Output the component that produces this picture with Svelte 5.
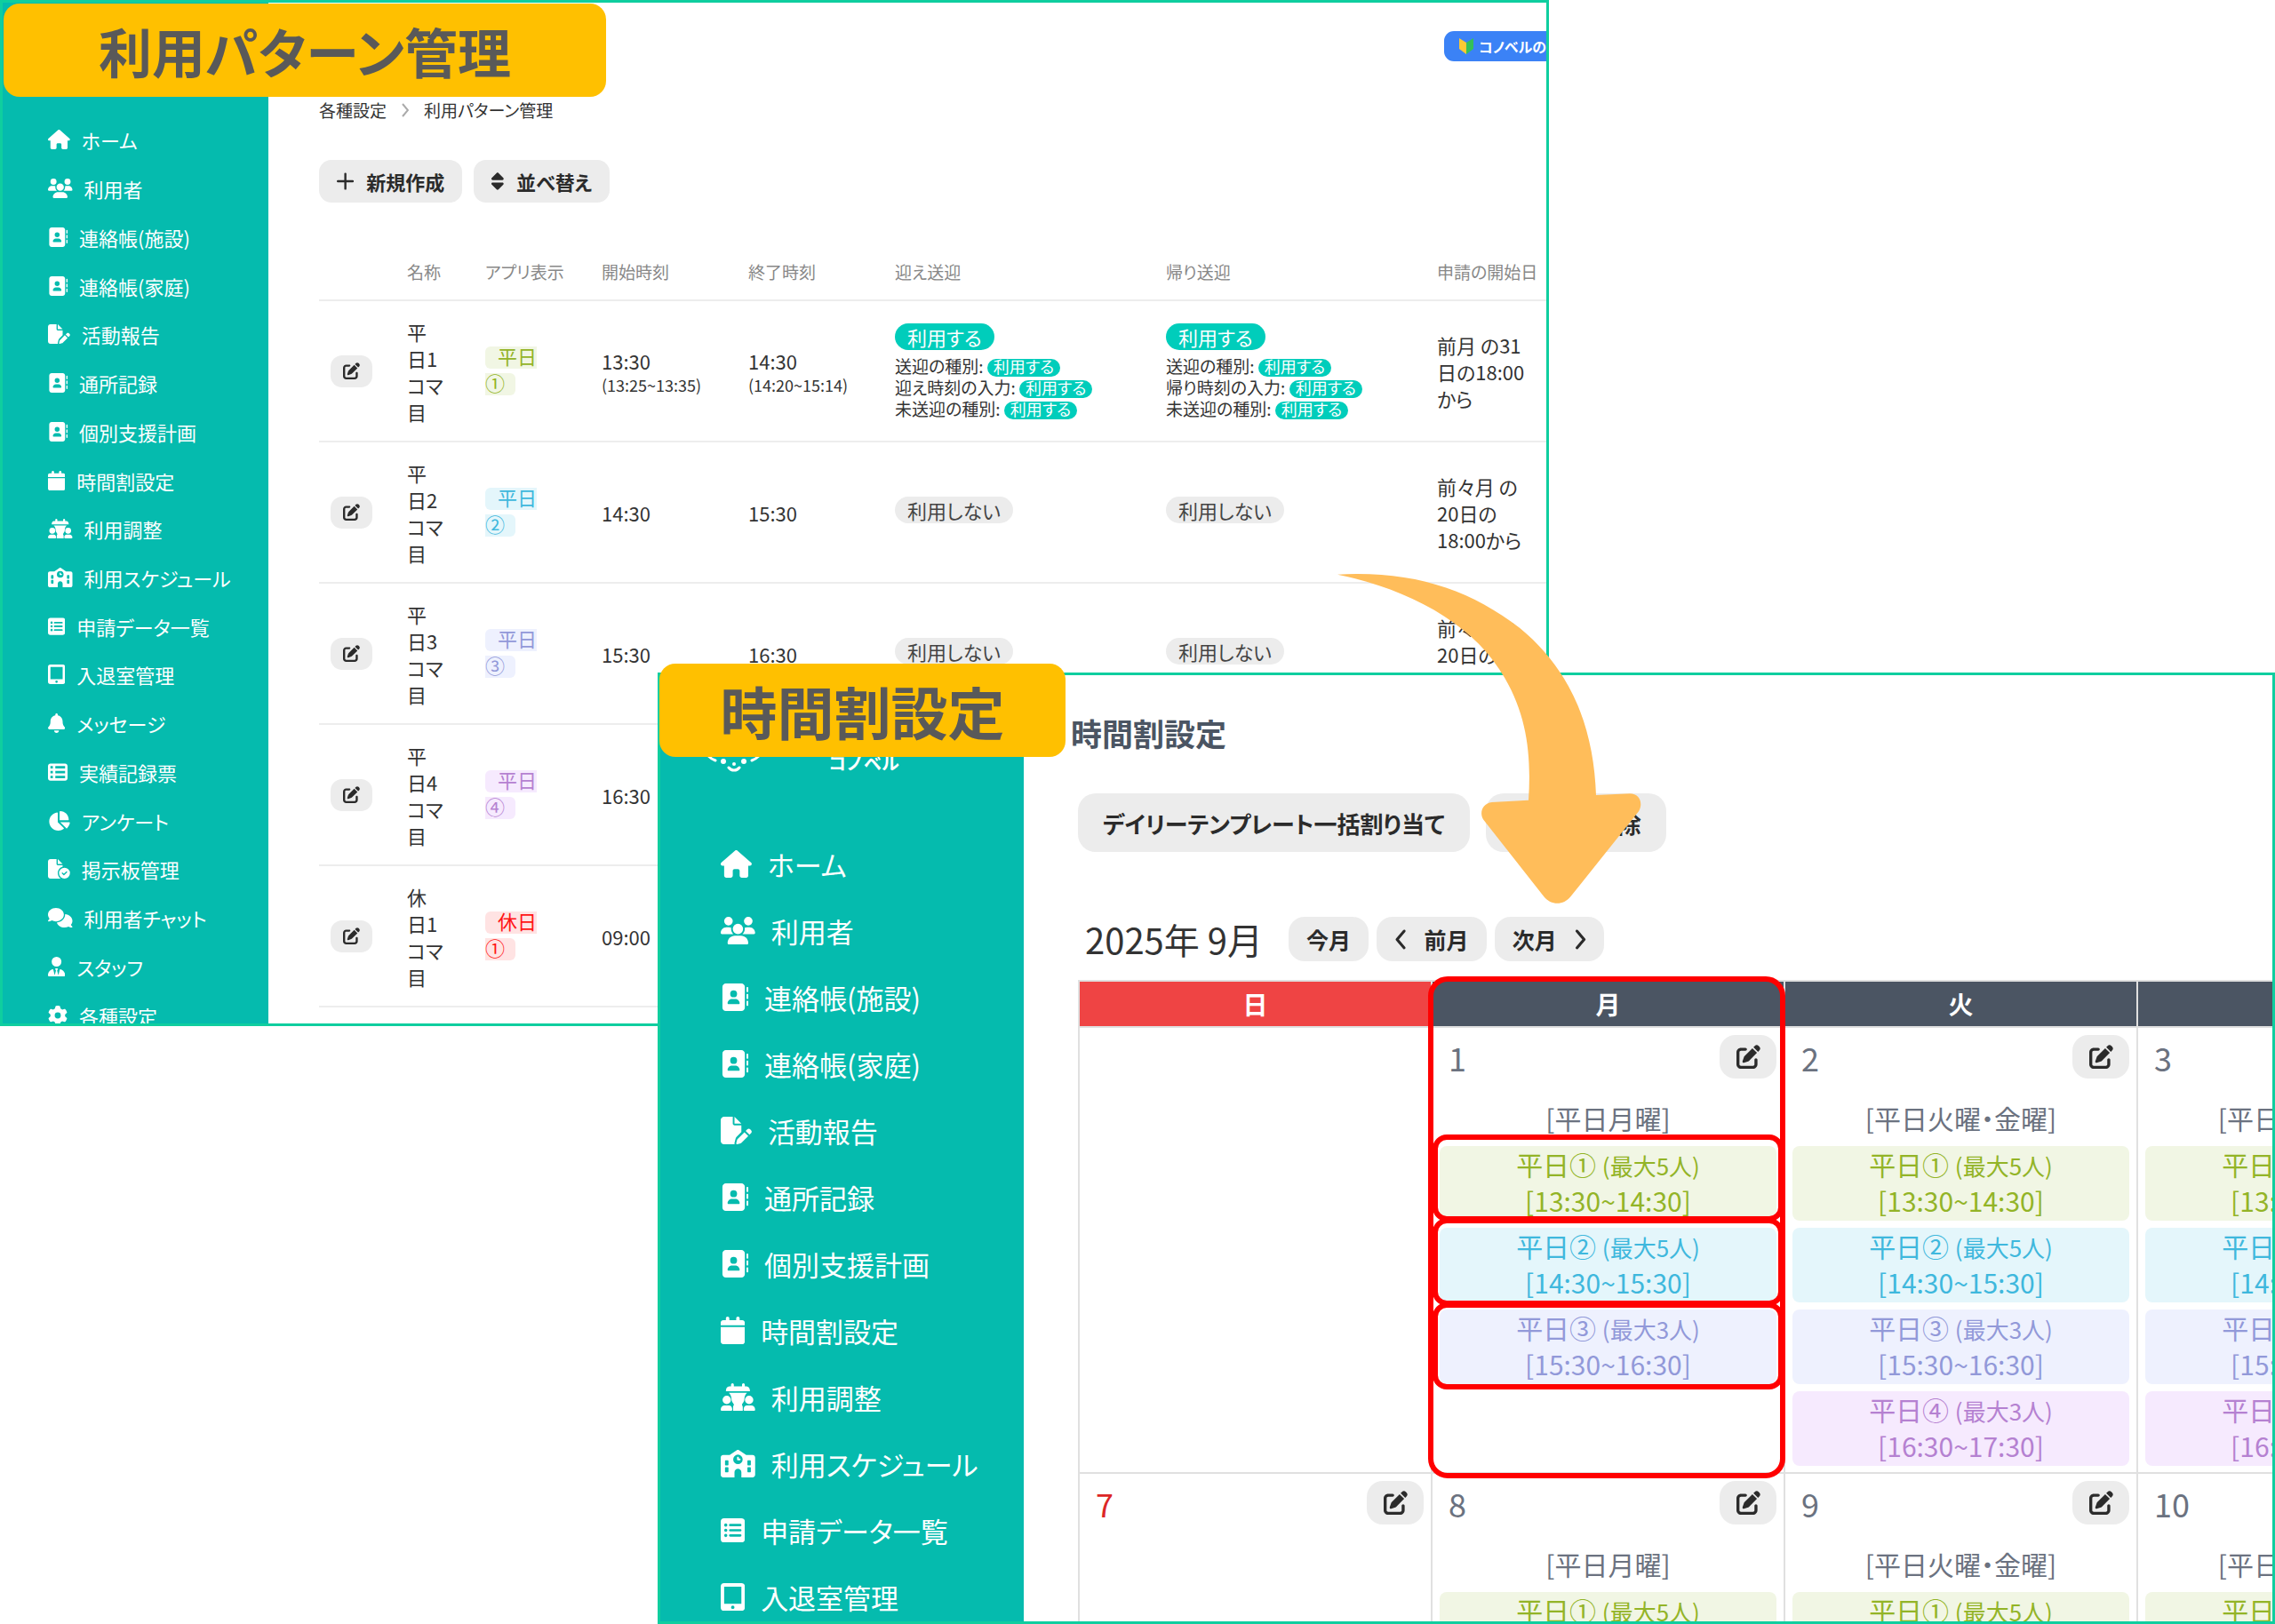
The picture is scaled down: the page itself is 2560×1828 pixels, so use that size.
<script>
  const icons = {
    house: {
      w: 576,
      d: "M575.8 255.5c0 18-15 32.1-32 32.1l-32 0 .7 160.2c0 2.7-.2 5.4-.5 8.1l0 16.2c0 22.1-17.9 40-40 40l-16 0c-1.1 0-2.2 0-3.3-.1c-1.4 .1-2.8 .1-4.2 .1L416 512l-24 0c-22.1 0-40-17.9-40-40l0-24 0-64c0-17.7-14.3-32-32-32l-64 0c-17.7 0-32 14.3-32 32l0 64 0 24c0 22.1-17.9 40-40 40l-24 0-31.9 0c-1.5 0-3-.1-4.5-.2c-1.2 .1-2.4 .2-3.6 .2l-16 0c-22.1 0-40-17.9-40-40l0-112c0-.9 0-1.9 .1-2.8l0-69.7-32 0c-18 0-32-14-32-32.1c0-9 3-17 10-24L266.4 8c7-7 15-8 22-8s15 2 21 7L564.8 231.5c8 7 12 15 11 24z"
    },
    users: {
      w: 640,
      d: "M144 0a80 80 0 1 1 0 160A80 80 0 1 1 144 0zM512 0a80 80 0 1 1 0 160A80 80 0 1 1 512 0zM0 298.7C0 239.8 47.8 192 106.7 192l42.7 0c15.9 0 31 3.5 44.6 9.7c-1.3 7.2-1.9 14.7-1.9 22.3c0 38.2 16.8 72.5 43.3 96c-.2 0-.4 0-.7 0L21.3 320C9.6 320 0 310.4 0 298.7zM405.3 320c-.2 0-.4 0-.7 0c26.6-23.5 43.3-57.8 43.3-96c0-7.6-.7-15-1.9-22.3c13.6-6.3 28.7-9.7 44.6-9.7l42.7 0C592.2 192 640 239.8 640 298.7c0 11.8-9.6 21.3-21.3 21.3l-213.3 0zM224 224a96 96 0 1 1 192 0 96 96 0 1 1 -192 0zM128 485.3C128 411.7 187.7 352 261.3 352l117.3 0C452.3 352 512 411.7 512 485.3c0 14.7-11.9 26.7-26.7 26.7l-330.7 0c-14.7 0-26.7-11.9-26.7-26.7z"
    },
    book: {
      w: 512,
      d: "M96 0C60.7 0 32 28.7 32 64l0 384c0 35.3 28.7 64 64 64l288 0c35.3 0 64-28.7 64-64l0-384c0-35.3-28.7-64-64-64L96 0zM208 288l64 0c44.2 0 80 35.8 80 80c0 8.8-7.2 16-16 16l-192 0c-8.8 0-16-7.2-16-16c0-44.2 35.8-80 80-80zm-32-96a64 64 0 1 1 128 0 64 64 0 1 1 -128 0zM512 80c0-8.8-7.2-16-16-16s-16 7.2-16 16l0 64c0 8.8 7.2 16 16 16s16-7.2 16-16l0-64zM496 192c-8.8 0-16 7.2-16 16l0 64c0 8.8 7.2 16 16 16s16-7.2 16-16l0-64c0-8.8-7.2-16-16-16zm16 144c0-8.8-7.2-16-16-16s-16 7.2-16 16l0 64c0 8.8 7.2 16 16 16s16-7.2 16-16l0-64z"
    },
    filePen: {
      w: 576,
      d: "M0 64C0 28.7 28.7 0 64 0L224 0l0 128c0 17.7 14.3 32 32 32l128 0 0 125.7-86.8 86.8c-10.3 10.3-17.5 23.1-21 37.2l-18.7 74.9c-2.3 9.2-1.8 18.8 1.3 27.5L64 512c-35.3 0-64-28.7-64-64L0 64zm384 64l-128 0L256 0 384 128zM549.8 235.7l14.4 14.4c15.6 15.6 15.6 40.9 0 56.6l-29.4 29.4-71-71 29.4-29.4c15.6-15.6 40.9-15.6 56.6 0zM311.9 417L441.1 287.8l71 71L382.9 487.9c-4.1 4.1-9.2 7-14.9 8.4l-60.1 15c-5.5 1.4-11.2-.2-15.2-4.2s-5.6-9.7-4.2-15.2l15-60.1c1.4-5.6 4.3-10.8 8.4-14.9z"
    },
    calendar: {
      w: 448,
      d: "M96 32l0 32L48 64C21.5 64 0 85.5 0 112l0 48 448 0 0-48c0-26.5-21.5-48-48-48l-48 0 0-32c0-17.7-14.3-32-32-32s-32 14.3-32 32l0 32L160 64l0-32c0-17.7-14.3-32-32-32S96 14.3 96 32zM448 192L0 192 0 464c0 26.5 21.5 48 48 48l352 0c26.5 0 48-21.5 48-48l0-272z"
    },
    adjust: {
      w: 640,
      d: "M192 26a26 26 0 0 1 52 0V56H396V26a26 26 0 0 1 52 0V56H480c40 0 64 36 64 92H96c0-56 24-92 64-92h32zM150 176h340c-20 14-50 54-50 114c0 56-30 72-44 104c-6 14 14 26 14 50v68H230v-68c0-24 20-36 14-50c-14-32-44-48-44-104c0-60-30-100-50-114zM112 232a78 78 0 1 1 0 156a78 78 0 1 1 0-156zM528 232a78 78 0 1 1 0 156a78 78 0 1 1 0-156zM0 490c0-44 32-76 74-76h78c40 0 62 34 62 76c0 12-10 22-22 22H22c-12 0-22-10-22-22zM426 490c0-42 22-76 62-76h78c42 0 74 32 74 76c0 12-10 22-22 22H448c-12 0-22-10-22-22z"
    },
    school: {
      w: 640,
      d: "M337.8 5.4C327-1.8 313-1.8 302.2 5.4L166.3 96 48 96C21.5 96 0 117.5 0 144L0 464c0 26.5 21.5 48 48 48l208 0 0-96c0-35.3 28.7-64 64-64s64 28.7 64 64l0 96 208 0c26.5 0 48-21.5 48-48l0-320c0-26.5-21.5-48-48-48L473.7 96 337.8 5.4zM96 192l32 0c8.8 0 16 7.2 16 16l0 64c0 8.8-7.2 16-16 16l-32 0c-8.8 0-16-7.2-16-16l0-64c0-8.8 7.2-16 16-16zm400 16c0-8.8 7.2-16 16-16l32 0c8.8 0 16 7.2 16 16l0 64c0 8.8-7.2 16-16 16l-32 0c-8.8 0-16-7.2-16-16l0-64zM96 320l32 0c8.8 0 16 7.2 16 16l0 64c0 8.8-7.2 16-16 16l-32 0c-8.8 0-16-7.2-16-16l0-64c0-8.8 7.2-16 16-16zm400 16c0-8.8 7.2-16 16-16l32 0c8.8 0 16 7.2 16 16l0 64c0 8.8-7.2 16-16 16l-32 0c-8.8 0-16-7.2-16-16l0-64zM232 176a88 88 0 1 1 176 0 88 88 0 1 1 -176 0zm88-48c-8.8 0-16 7.2-16 16l0 32c0 8.8 7.2 16 16 16l32 0c8.8 0 16-7.2 16-16s-7.2-16-16-16l-16 0 0-16c0-8.8-7.2-16-16-16z"
    },
    list: {
      w: 448,
      d: "M64 32h320a64 64 0 0 1 64 64v320a64 64 0 0 1-64 64H64a64 64 0 0 1-64-64V96a64 64 0 0 1 64-64zM64 160a30 30 0 1 0 60 0a30 30 0 1 0-60 0zM64 256a30 30 0 1 0 60 0a30 30 0 1 0-60 0zM64 352a30 30 0 1 0 60 0a30 30 0 1 0-60 0zM176 138h188a22 22 0 0 1 0 44H176a22 22 0 0 1 0-44zM176 234h188a22 22 0 0 1 0 44H176a22 22 0 0 1 0-44zM176 330h188a22 22 0 0 1 0 44H176a22 22 0 0 1 0-44z"
    },
    tablet: {
      w: 448,
      d: "M64 0h320a64 64 0 0 1 64 64v384a64 64 0 0 1-64 64H64a64 64 0 0 1-64-64V64a64 64 0 0 1 64-64zM64 64v320h320V64zM192 448a32 32 0 1 0 64 0a32 32 0 1 0-64 0z"
    },
    bell: {
      w: 448,
      d: "M224 0c-17.7 0-32 14.3-32 32l0 19.2C119 66 64 130.6 64 208l0 18.8c0 47-17.3 92.4-48.5 127.6l-7.4 8.3c-8.4 9.4-10.4 22.9-5.3 34.4S19.4 416 32 416l384 0c12.6 0 24-7.4 29.2-18.9s3.1-25-5.3-34.4l-7.4-8.3C401.3 319.2 384 273.9 384 226.8l0-18.8c0-77.4-55-142-128-156.8L256 32c0-17.7-14.3-32-32-32zm45.3 493.3c12-12 18.7-28.3 18.7-45.3l-64 0-64 0c0 17 6.7 33.3 18.7 45.3s28.3 18.7 45.3 18.7s33.3-6.7 45.3-18.7z"
    },
    tableList: {
      w: 512,
      d: "M0 96C0 60.7 28.7 32 64 32l384 0c35.3 0 64 28.7 64 64l0 320c0 35.3-28.7 64-64 64L64 480c-35.3 0-64-28.7-64-64L0 96zm64 0l0 64 64 0 0-64L64 96zm384 0L192 96l0 64 256 0 0-64zM64 224l0 64 64 0 0-64-64 0zm384 0l-256 0 0 64 256 0 0-64zM64 352l0 64 64 0 0-64-64 0zm384 0l-256 0 0 64 256 0 0-64z"
    },
    pie: {
      w: 576,
      d: "M304 240l0-223.4c0-9 7-16.6 16-16.6C443.7 0 544 100.3 544 224c0 9-7.6 16-16.6 16L304 240zM32 272C32 150.7 122.1 50.3 239 34.3c9.2-1.3 17 6.1 17 15.4L256 288 412.5 444.5c6.7 6.7 6.2 17.7-1.5 23.1C371.8 495.6 323.8 512 272 512C139.5 512 32 404.6 32 272zm526.4 16c9.3 0 16.6 7.8 15.4 17c-7.7 55.9-34.6 105.6-73.9 142.3c-6 5.6-15.4 5.2-21.2-.7L320 288l238.4 0z"
    },
    fileCheck: {
      w: 576,
      d: "M0 64C0 28.7 28.7 0 64 0L224 0l0 128c0 17.7 14.3 32 32 32l128 0 0 38.6C310.1 219.5 256 287.4 256 368c0 59.1 29.1 111.3 73.7 143.3c-3.2 .5-6.4 .7-9.7 .7L64 512c-35.3 0-64-28.7-64-64L0 64zm384 64l-128 0L256 0 384 128zM288 368a144 144 0 1 1 288 0 144 144 0 1 1 -288 0zm211.3-43.3c-6.2-6.2-16.4-6.2-22.6 0L416 385.4l-28.7-28.7c-6.2-6.2-16.4-6.2-22.6 0s-6.2 16.4 0 22.6l40 40c6.2 6.2 16.4 6.2 22.6 0l72-72c6.2-6.2 6.2-16.4 0-22.6z"
    },
    comments: {
      w: 640,
      d: "M208 352c114.9 0 208-78.8 208-176S322.9 0 208 0S0 78.8 0 176c0 38.6 14.7 74.3 39.6 103.4c-3.5 9.4-8.7 17.7-14.2 24.7c-4.8 6.2-9.7 11-13.3 14.3c-1.8 1.6-3.3 2.9-4.3 3.7c-.5 .4-.9 .7-1.1 .8l-.2 .2C1 327.2-1.4 334.4 .8 340.9S9.1 352 16 352c21.8 0 43.8-5.6 62.1-12.5c9.2-3.5 17.8-7.4 25.2-11.4C134.1 343.3 169.8 352 208 352zM448 176c0 112.3-99.1 196.9-216.5 207C255.8 457.4 336.4 512 432 512c38.2 0 73.9-8.7 104.7-23.9c7.5 4 16 7.9 25.2 11.4c18.3 6.9 40.3 12.5 62.1 12.5c6.9 0 13.1-4.5 15.2-11.1c2.1-6.6-.2-13.8-5.8-17.9l-.2-.2c-.2-.2-.6-.4-1.1-.8c-1-.8-2.5-2-4.3-3.7c-3.6-3.3-8.5-8.1-13.3-14.3c-5.5-7-10.7-15.4-14.2-24.7c24.9-29 39.6-64.7 39.6-103.4c0-92.8-84.9-168.9-192.6-175.5c.4 5.1 .6 10.3 .6 15.5z"
    },
    staff: {
      w: 448,
      d: "M96 128a128 128 0 1 0 256 0A128 128 0 1 0 96 128zm94.5 200.2l18.6 31L175.8 483.1l-36-146.9c-2-8.1-9.8-13.4-17.9-11.3C51.9 342.4 0 405.8 0 481.3c0 17 13.8 30.7 30.7 30.7l131.7 0c0 0 0 0 .1 0l5.5 0 112 0 5.5 0c0 0 0 0 .1 0l131.7 0c17 0 30.7-13.8 30.7-30.7c0-75.5-51.9-138.9-121.9-156.4c-8.1-2-15.9 3.3-17.9 11.3l-36 146.9L238.9 359.2l18.6-31c6.4-10.7-1.3-24.2-13.7-24.2L224 304l-19.7 0c-12.4 0-20.1 13.6-13.7 24.2z"
    },
    gear: {
      w: 512,
      d: "M495.9 166.6c3.2 8.7 .5 18.4-6.4 24.6l-43.3 39.4c1.1 8.3 1.7 16.8 1.7 25.4s-.6 17.1-1.7 25.4l43.3 39.4c6.9 6.2 9.6 15.9 6.4 24.6c-4.4 11.9-9.7 23.3-15.8 34.3l-4.7 8.1c-6.6 11-14 21.4-22.1 31.2c-5.9 7.2-15.7 9.6-24.5 6.8l-55.7-17.7c-13.4 10.3-28.2 18.9-44 25.4l-12.5 57.1c-2 9.1-9 16.3-18.2 17.8c-13.8 2.3-28 3.5-42.5 3.5s-28.7-1.2-42.5-3.5c-9.2-1.5-16.2-8.7-18.2-17.8l-12.5-57.1c-15.8-6.5-30.6-15.1-44-25.4L83.1 425.9c-8.8 2.8-18.6 .3-24.5-6.8c-8.1-9.8-15.5-20.2-22.1-31.2l-4.7-8.1c-6.1-11-11.4-22.4-15.8-34.3c-3.2-8.7-.5-18.4 6.4-24.6l43.3-39.4C64.6 273.1 64 264.6 64 256s.6-17.1 1.7-25.4L22.4 191.2c-6.9-6.2-9.6-15.9-6.4-24.6c4.4-11.9 9.7-23.3 15.8-34.3l4.7-8.1c6.6-11 14-21.4 22.1-31.2c5.9-7.2 15.7-9.6 24.5-6.8l55.7 17.7c13.4-10.3 28.2-18.9 44-25.4l12.5-57.1c2-9.1 9-16.3 18.2-17.8C227.3 1.2 241.5 0 256 0s28.7 1.2 42.5 3.5c9.2 1.5 16.2 8.7 18.2 17.8l12.5 57.1c15.8 6.5 30.6 15.1 44 25.4l55.7-17.7c8.8-2.8 18.6-.3 24.5 6.8c8.1 9.8 15.5 20.2 22.1 31.2l4.7 8.1c6.1 11 11.4 22.4 15.8 34.3zM256 336a80 80 0 1 0 0-160 80 80 0 1 0 0 160z"
    },
    edit: {
      w: 512,
      d: "M471.6 21.7c-21.9-21.9-57.3-21.9-79.2 0L362.3 51.7l97.9 97.9 30.1-30.1c21.9-21.9 21.9-57.3 0-79.2L471.6 21.7zm-299.2 220c-6.1 6.1-10.8 13.6-13.5 21.9l-29.6 88.8c-2.9 8.6-.6 18.1 5.8 24.6s15.9 8.7 24.6 5.8l88.8-29.6c8.2-2.7 15.7-7.4 21.9-13.5L437.7 172.3 339.7 74.3 172.4 241.7zM96 64C43 64 0 107 0 160L0 416c0 53 43 96 96 96l256 0c53 0 96-43 96-96l0-96c0-17.7-14.3-32-32-32s-32 14.3-32 32l0 96c0 17.7-14.3 32-32 32L96 448c-17.7 0-32-14.3-32-32l0-256c0-17.7 14.3-32 32-32l96 0c17.7 0 32-14.3 32-32s-14.3-32-32-32L96 64z"
    },
    plus: {
      w: 448,
      d: "M224 32a28 28 0 0 1 28 28V228H420a28 28 0 0 1 0 56H252V452a28 28 0 0 1-56 0V284H28a28 28 0 0 1 0-56H196V60a28 28 0 0 1 28-28z"
    },
    sort: {
      w: 320,
      d: "M137 41c13-13 33-13 46 0L311 169c20 20 6 55-23 55H32c-29 0-43-35-23-55zM137 471c13 13 33 13 46 0L311 343c20-20 6-55-23-55H32c-29 0-43 35-23 55z"
    },
    left: {
      w: 320,
      d: "M234 32a32 32 0 0 1 18 52L105 256l147 172a32 32 0 0 1-48 42L38 277a32 32 0 0 1 0-42L204 42a32 32 0 0 1 30-10z"
    },
    right: {
      w: 320,
      d: "M86 32a32 32 0 0 0-18 52l147 172L68 428a32 32 0 0 0 48 42l166-193a32 32 0 0 0 0-42L116 42a32 32 0 0 0-30-10z"
    }
  };

  const menu = [
    { icon: "house", label: "ホーム" },
    { icon: "users", label: "利用者" },
    { icon: "book", label: "連絡帳(施設)" },
    { icon: "book", label: "連絡帳(家庭)" },
    { icon: "filePen", label: "活動報告" },
    { icon: "book", label: "通所記録" },
    { icon: "book", label: "個別支援計画" },
    { icon: "calendar", label: "時間割設定" },
    { icon: "adjust", label: "利用調整" },
    { icon: "school", label: "利用スケジュール" },
    { icon: "list", label: "申請データ一覧" },
    { icon: "tablet", label: "入退室管理" },
    { icon: "bell", label: "メッセージ" },
    { icon: "tableList", label: "実績記録票" },
    { icon: "pie", label: "アンケート" },
    { icon: "fileCheck", label: "掲示板管理" },
    { icon: "comments", label: "利用者チャット" },
    { icon: "staff", label: "スタッフ" },
    { icon: "gear", label: "各種設定" }
  ];

  const patterns = [
    {
      name: ["平", "日1", "コマ", "目"],
      tag: "平日①",
      color: "green",
      start: "13:30",
      startRange: "(13:25~13:35)",
      end: "14:30",
      endRange: "(14:20~15:14)",
      pickup: ["送迎の種別", "迎え時刻の入力", "未送迎の種別"],
      dropoff: ["送迎の種別", "帰り時刻の入力", "未送迎の種別"],
      opens: ["前月 の31", "日の18:00", "から"]
    },
    { name: ["平", "日2", "コマ", "目"], tag: "平日②", color: "blue", start: "14:30", end: "15:30", opens: ["前々月 の", "20日の", "18:00から"] },
    { name: ["平", "日3", "コマ", "目"], tag: "平日③", color: "indigo", start: "15:30", end: "16:30", opens: ["前々月 の", "20日の", "18:00から"] },
    { name: ["平", "日4", "コマ", "目"], tag: "平日④", color: "purple", start: "16:30", end: "17:30", opens: ["前々月 の", "20日の", "18:00から"] },
    { name: ["休", "日1", "コマ", "目"], tag: "休日①", color: "red", start: "09:00", end: "10:00", opens: ["前々月 の", "20日の", "18:00から"] }
  ];

  const slots = [
    { name: "平日①", max: 5, time: "13:30~14:30", color: "green" },
    { name: "平日②", max: 5, time: "14:30~15:30", color: "blue" },
    { name: "平日③", max: 3, time: "15:30~16:30", color: "indigo" },
    { name: "平日④", max: 3, time: "16:30~17:30", color: "purple" }
  ];

  const weekdays = ["日", "月", "火", "水"];
  const weeks = [
    [
      {},
      { day: 1, title: "平日月曜", slots: slots.slice(0, 3), marked: true },
      { day: 2, title: "平日火曜・金曜", slots },
      { day: 3, title: "平日水曜・木曜", slots }
    ],
    [
      { day: 7, holiday: true },
      { day: 8, title: "平日月曜", slots: slots.slice(0, 3) },
      { day: 9, title: "平日火曜・金曜", slots },
      { day: 10, title: "平日水曜・木曜", slots }
    ]
  ];
</script>

{#snippet icon(name)}
  <svg
    class="icon"
    viewBox="0 0 {icons[name].w} 512"
    style="width: {icons[name].w / 512}em"
    aria-hidden="true">
    <path fill-rule="evenodd" d={icons[name].d} />
  </svg>
{/snippet}

{#snippet sideMenu(items)}
  <nav>
    {#each items as item}
      <a href="#menu">{@render icon(item.icon)}<span>{item.label}</span></a>
    {/each}
  </nav>
{/snippet}

{#snippet transport(details)}
  {#if details}
    <span class="pill on">利用する</span>
    {#each details as detail}
      <div class="detail">{detail}: <span class="mini">利用する</span></div>
    {/each}
  {:else}
    <span class="pill">利用しない</span>
  {/if}
{/snippet}

<div class="page">
  <section class="window patterns">
    <h1 class="label">利用パターン管理</h1>
    <div class="frame">
      <aside>{@render sideMenu(menu)}</aside>
      <main>
        <div class="topbar">
          <button class="help">
            <svg class="beginner" viewBox="0 0 18 20" aria-hidden="true">
              <path fill="#fcc934" d="M1 1 9 6V19L1 13z" />
              <path fill="#34c05a" d="M17 1 9 6V19l8-6z" />
            </svg>
            コノベルの
          </button>
        </div>
        <div class="crumbs">
          <a href="#settings">各種設定</a>
          <svg viewBox="0 0 8 16" aria-hidden="true"><path d="M1 1l6 7-6 7" /></svg>
          <span>利用パターン管理</span>
        </div>
        <div class="actions">
          <button>{@render icon("plus")}新規作成</button>
          <button>{@render icon("sort")}並べ替え</button>
        </div>
        <table class="list">
          <thead>
            <tr>
              <th class="c-edit"></th>
              <th class="c-name">名称</th>
              <th class="c-tag">アプリ表示</th>
              <th class="c-time">開始時刻</th>
              <th class="c-time">終了時刻</th>
              <th class="c-ride">迎え送迎</th>
              <th class="c-ride">帰り送迎</th>
              <th>申請の開始日</th>
            </tr>
          </thead>
          <tbody>
            {#each patterns as row}
              <tr>
                <td><button class="edit" aria-label="編集">{@render icon("edit")}</button></td>
                <td>
                  {#each row.name as line}<div>{line}</div>{/each}
                </td>
                <td><div class="tag"><span class={row.color}>{row.tag}</span></div></td>
                <td>{row.start}{#if row.startRange}<small>{row.startRange}</small>{/if}</td>
                <td>{row.end}{#if row.endRange}<small>{row.endRange}</small>{/if}</td>
                <td>{@render transport(row.pickup)}</td>
                <td>{@render transport(row.dropoff)}</td>
                <td>
                  {#each row.opens as line}<div>{line}</div>{/each}
                </td>
              </tr>
            {/each}
          </tbody>
        </table>
      </main>
    </div>
  </section>

  <section class="window timetable">
    <h1 class="label">時間割設定</h1>
    <div class="frame">
      <aside>
        <div class="logo">
          <svg viewBox="0 0 64 64" aria-hidden="true">
            <path d="M3 42c3 3 6 5 9 6M62 42c-3 3-6 5-9 6M27 56c3 4 9 4 12 0" />
            <circle cx="21" cy="49" r="3" />
            <circle cx="44" cy="49" r="3" />
            <circle cx="33" cy="52" r="2" />
          </svg>
          <span>コノベル</span>
        </div>
        {@render sideMenu(menu.slice(0, 12))}
      </aside>
      <main>
        <h2>時間割設定</h2>
        <div class="actions">
          <button>デイリーテンプレート一括割り当て</button>
          <button>割り当て解除</button>
        </div>
        <div class="month">
          <span class="current">2025年 9月</span>
          <button>今月</button>
          <button>{@render icon("left")}前月</button>
          <button>次月{@render icon("right")}</button>
        </div>
        <table class="calendar">
          <thead>
            <tr>
              {#each weekdays as weekday, i}
                <th class:sunday={i === 0}>{weekday}</th>
              {/each}
            </tr>
          </thead>
          <tbody>
            {#each weeks as week}
              <tr>
                {#each week as cell}
                  <td>
                    {#if cell.marked}<div class="mark column"></div>{/if}
                    {#if cell.day}
                      <div class="head">
                        <span class:holiday={cell.holiday}>{cell.day}</span>
                        <button class="edit" aria-label="編集">{@render icon("edit")}</button>
                      </div>
                    {/if}
                    {#if cell.title}
                      <div class="title">[{cell.title}]</div>
                      <div class="slots">
                        {#each cell.slots as slot}
                          <div class="slot {slot.color}">
                            {slot.name} <small>(最大{slot.max}人)</small><br />
                            [{slot.time}]
                          </div>
                        {/each}
                        {#if cell.marked}
                          <div class="marks">
                            {#each cell.slots as _}<div class="mark"></div>{/each}
                          </div>
                        {/if}
                      </div>
                    {/if}
                  </td>
                {/each}
              </tr>
            {/each}
          </tbody>
        </table>
      </main>
    </div>
  </section>

  <svg class="arrow" viewBox="0 0 1260 1260" aria-hidden="true">
    <path
      d="M75 80C330 66 520 130 690 260C860 400 940 590 948 825L1062 820C1095 820 1108 852 1092 880L862 1168C838 1198 796 1198 772 1168L568 908C552 884 566 852 596 849L720 842C730 690 715 560 640 430C540 250 320 130 75 80z" />
  </svg>
</div>

<style>
  :global(body) {
    margin: 0;
    background: #fff;
  }
  .page {
    position: relative;
    display: grid;
    grid-template-columns: minmax(0, 740fr) minmax(0, 1003fr) minmax(0, 817fr);
    grid-template-rows: minmax(0, 757fr) minmax(0, 398fr) minmax(0, 673fr);
    height: 100vh;
    overflow: hidden;
    color: #333;
    font-family: "Noto Sans CJK JP", sans-serif;
    font-feature-settings: "palt";
  }
  button {
    display: flex;
    align-items: center;
    justify-content: center;
    border: 0;
    padding: 0;
    background: #ececec;
    color: #2b2b2b;
    font: inherit;
    font-weight: 700;
    white-space: nowrap;
    cursor: pointer;
  }
  a {
    color: inherit;
    text-decoration: none;
  }
  .icon {
    flex: none;
    height: 1em;
    fill: currentColor;
  }

  .window {
    position: relative;
    min-width: 0;
    min-height: 0;
  }
  .patterns {
    grid-area: 1 / 1 / 3 / 3;
  }
  .timetable {
    grid-area: 2 / 2 / 4 / 4;
  }
  .frame {
    display: flex;
    box-sizing: border-box;
    height: 100%;
    border: 3px solid #0fce9f;
    background: #fff;
    overflow: hidden;
  }
  .label {
    position: absolute;
    z-index: 2;
    top: 4px;
    left: 4px;
    width: 678px;
    margin: 0;
    border-radius: 18px;
    background: #ffc000;
    color: #595959;
    font-size: 60px;
    line-height: 105px;
    text-align: center;
  }
  .timetable .label {
    top: -10px;
    left: 2px;
    width: 457px;
    font-size: 64px;
  }

  aside {
    flex: none;
    width: 299px;
    overflow: hidden;
    background: #05bbae;
    color: #fff;
  }
  .timetable aside {
    width: 409px;
  }
  nav {
    display: flex;
    flex-direction: column;
    height: 1040px;
    padding: 127px 0 0 51px;
    font-size: 22px;
  }
  nav a {
    flex: 1;
    display: flex;
    align-items: center;
    gap: 13px;
    white-space: nowrap;
  }
  .timetable nav {
    height: 900px;
    padding: 0 0 0 68px;
    font-size: 31px;
  }
  .timetable nav a {
    gap: 18px;
  }
  .logo {
    display: flex;
    align-items: flex-end;
    gap: 75px;
    box-sizing: border-box;
    height: 175px;
    padding: 0 0 63px 50px;
    font-size: 20px;
    font-weight: 700;
    line-height: 26px;
    font-feature-settings: normal;
  }
  .logo svg {
    width: 64px;
    height: 64px;
    fill: #fff;
  }
  .logo path {
    fill: none;
    stroke: #fff;
    stroke-width: 3;
    stroke-linecap: round;
  }

  main {
    flex: 1;
    min-width: 0;
    padding-left: 57px;
    overflow: hidden;
  }
  .topbar {
    display: flex;
    justify-content: flex-end;
    padding-top: 32px;
  }
  .help {
    gap: 5px;
    height: 34px;
    padding-left: 16px;
    border-radius: 11px 0 0 11px;
    background: #3b82f6;
    color: #fff;
    font-size: 16px;
  }
  .beginner {
    width: 18px;
    height: 20px;
  }
  .crumbs {
    display: flex;
    align-items: center;
    gap: 17px;
    margin-top: 41px;
    font-size: 19px;
    line-height: 28px;
  }
  .crumbs svg {
    width: 8px;
    height: 16px;
    fill: none;
    stroke: #aaa;
    stroke-width: 2;
  }
  .actions {
    display: flex;
    gap: 13px;
    margin-top: 42px;
  }
  .actions button {
    gap: 14px;
    height: 48px;
    padding: 0 20px;
    border-radius: 14px;
    font-size: 22px;
  }

  table {
    border-collapse: collapse;
    table-layout: fixed;
  }
  .list {
    width: 100%;
    margin-top: 46px;
    font-size: 22px;
    line-height: 30px;
  }
  .list th,
  .list td {
    padding: 0;
    border-bottom: 2px solid #ededed;
    text-align: left;
    white-space: nowrap;
  }
  .list th {
    height: 63px;
    color: #888;
    font-size: 19px;
    font-weight: 400;
  }
  .list td {
    height: 157px;
  }
  .c-edit {
    width: 99px;
  }
  .c-name {
    width: 88px;
  }
  .c-tag {
    width: 131px;
  }
  .c-time {
    width: 165px;
  }
  .c-ride {
    width: 305px;
  }
  .edit {
    width: 47px;
    height: 36px;
    border-radius: 13px;
    font-size: 19px;
  }
  .list .edit {
    margin-left: 13px;
  }
  .tag {
    width: 64px;
    font-family: "Liberation Sans", "Noto Sans CJK JP", sans-serif;
    white-space: normal;
  }
  .tag span {
    padding: 0 12px 0 14px;
    border-radius: 6px;
  }
  .list small {
    display: block;
    font-size: 18px;
    line-height: 24px;
  }
  .pill {
    display: inline-block;
    margin-bottom: 6px;
    padding: 0 14px;
    border-radius: 16px;
    background: #ececec;
    color: #444;
    vertical-align: top;
  }
  .detail {
    font-size: 19px;
    line-height: 24px;
  }
  .mini {
    padding: 0 7px;
    border-radius: 10px;
    font-family: "Liberation Sans", "Noto Sans CJK JP", sans-serif;
    font-size: 18px;
    line-height: 16px;
  }
  .on,
  .mini {
    background: #00cdbb;
    color: #fff;
  }

  .green {
    background: #f1f6e4;
    color: #93b427;
  }
  .blue {
    background: #e4f6fb;
    color: #3fb8dd;
  }
  .indigo {
    background: #eef1fe;
    color: #9299d9;
  }
  .purple {
    background: #f6eafe;
    color: #b581d1;
  }
  .red {
    background: #ffe3e3;
    color: #ff1515;
  }

  .timetable main {
    padding-left: 61px;
  }
  h2 {
    margin: 43px 0 0 -8px;
    color: #4b5563;
    font-size: 35px;
    font-weight: 700;
    line-height: 44px;
  }
  .timetable .actions {
    gap: 18px;
    margin-top: 46px;
  }
  .timetable .actions button {
    min-width: 202px;
    height: 66px;
    padding: 0 28px;
    border-radius: 20px;
    font-size: 26px;
  }
  .month {
    display: flex;
    align-items: center;
    gap: 9px;
    margin-top: 73px;
    padding-left: 8px;
  }
  .current {
    margin-right: 20px;
    font-size: 40px;
    line-height: 50px;
  }
  .month button {
    gap: 18px;
    height: 50px;
    padding: 0 20px;
    border-radius: 18px;
    font-size: 25px;
  }
  .calendar {
    width: 1590px;
    margin-top: 21px;
  }
  .calendar th,
  .calendar td {
    position: relative;
    border: 2px solid #e0e0e0;
  }
  .calendar th {
    height: 50px;
    padding: 0;
    background: #4b5563;
    color: #fff;
    font-size: 28px;
    line-height: 40px;
  }
  .calendar .sunday {
    background: #ef4444;
  }
  .calendar td {
    height: 492px;
    padding: 8px 8px 0;
    color: #6b7280;
    font-size: 30px;
    line-height: 42px;
    text-align: center;
    vertical-align: top;
  }
  .head {
    display: flex;
    align-items: center;
    justify-content: space-between;
    margin-bottom: 23px;
    padding-left: 10px;
    font-size: 36px;
  }
  .head .edit {
    width: 64px;
    height: 49px;
    border-radius: 18px;
    font-size: 27px;
  }
  .holiday {
    color: #dc2626;
  }
  .title {
    margin-bottom: 11px;
    white-space: nowrap;
  }
  .slots {
    position: relative;
    display: flex;
    flex-direction: column;
    gap: 8px;
  }
  .slot {
    padding-bottom: 2px;
    border-radius: 8px;
    line-height: 41px;
    white-space: nowrap;
  }
  .slot small {
    font-size: 26px;
    line-height: 30px;
  }
  .mark {
    box-sizing: border-box;
    border: 6px solid #f00;
    border-radius: 16px;
  }
  .marks {
    position: absolute;
    z-index: 1;
    inset: -13px -8px -6px -8px;
    display: flex;
    flex-direction: column;
  }
  .marks .mark {
    flex: 1;
  }
  .marks .mark + .mark {
    margin-top: -4px;
  }
  .column {
    position: absolute;
    z-index: 1;
    inset: -58px -2px -7px -5px;
    border-radius: 22px;
  }

  .arrow {
    position: absolute;
    z-index: 3;
    top: 33.9%;
    left: 57.8%;
    width: 420px;
    height: 420px;
    fill: #ffbd5a;
    pointer-events: none;
  }
</style>
